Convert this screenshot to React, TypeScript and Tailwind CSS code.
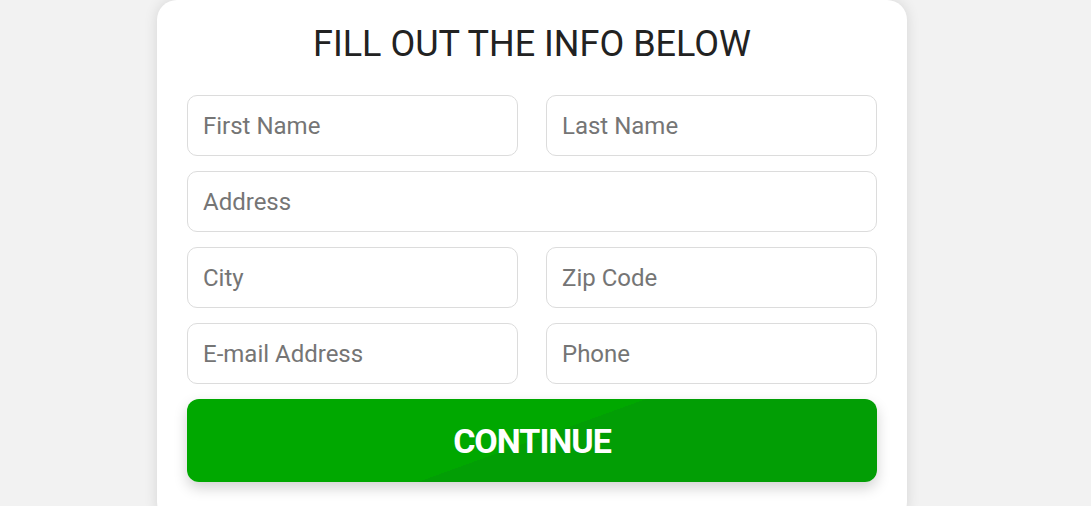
import React from "react";

function Field({ placeholder }: { placeholder: string }) {
  return (
    <input
      type="text"
      placeholder={placeholder}
      className="h-[61px] w-full rounded-[10px] border border-[#dcdcdc] bg-white px-[15px] text-[24px] text-[#333] placeholder:text-[#757575] outline-none"
    />
  );
}

export default function App() {
  return (
    <div className="min-h-[506px] w-full overflow-hidden bg-[#f2f2f2] [font-family:Roboto,'Liberation_Sans',sans-serif]">
      <div className="ml-[157px] w-[750px] rounded-[20px] bg-white px-[30px] pt-[20px] pb-[40px] shadow-[0_0_14px_rgba(0,0,0,0.12)]">
        <h1 className="text-center text-[36px] font-normal leading-[48px] text-[#222]">
          FILL OUT THE INFO BELOW
        </h1>
        <div className="mt-[27px] flex flex-col gap-[15px]">
          <div className="grid grid-cols-2 gap-[28px]">
            <Field placeholder="First Name" />
            <Field placeholder="Last Name" />
          </div>
          <Field placeholder="Address" />
          <div className="grid grid-cols-2 gap-[28px]">
            <Field placeholder="City" />
            <Field placeholder="Zip Code" />
          </div>
          <div className="grid grid-cols-2 gap-[28px]">
            <Field placeholder="E-mail Address" />
            <Field placeholder="Phone" />
          </div>
          <button className="h-[83px] w-full rounded-[12px] bg-[linear-gradient(160deg,#00a800_50%,#029e05_50%)] pt-[2px] text-[34px] font-bold tracking-[-1px] text-white shadow-[0_6px_14px_rgba(0,0,0,0.18)]">
            CONTINUE
          </button>
        </div>
      </div>
    </div>
  );
}
